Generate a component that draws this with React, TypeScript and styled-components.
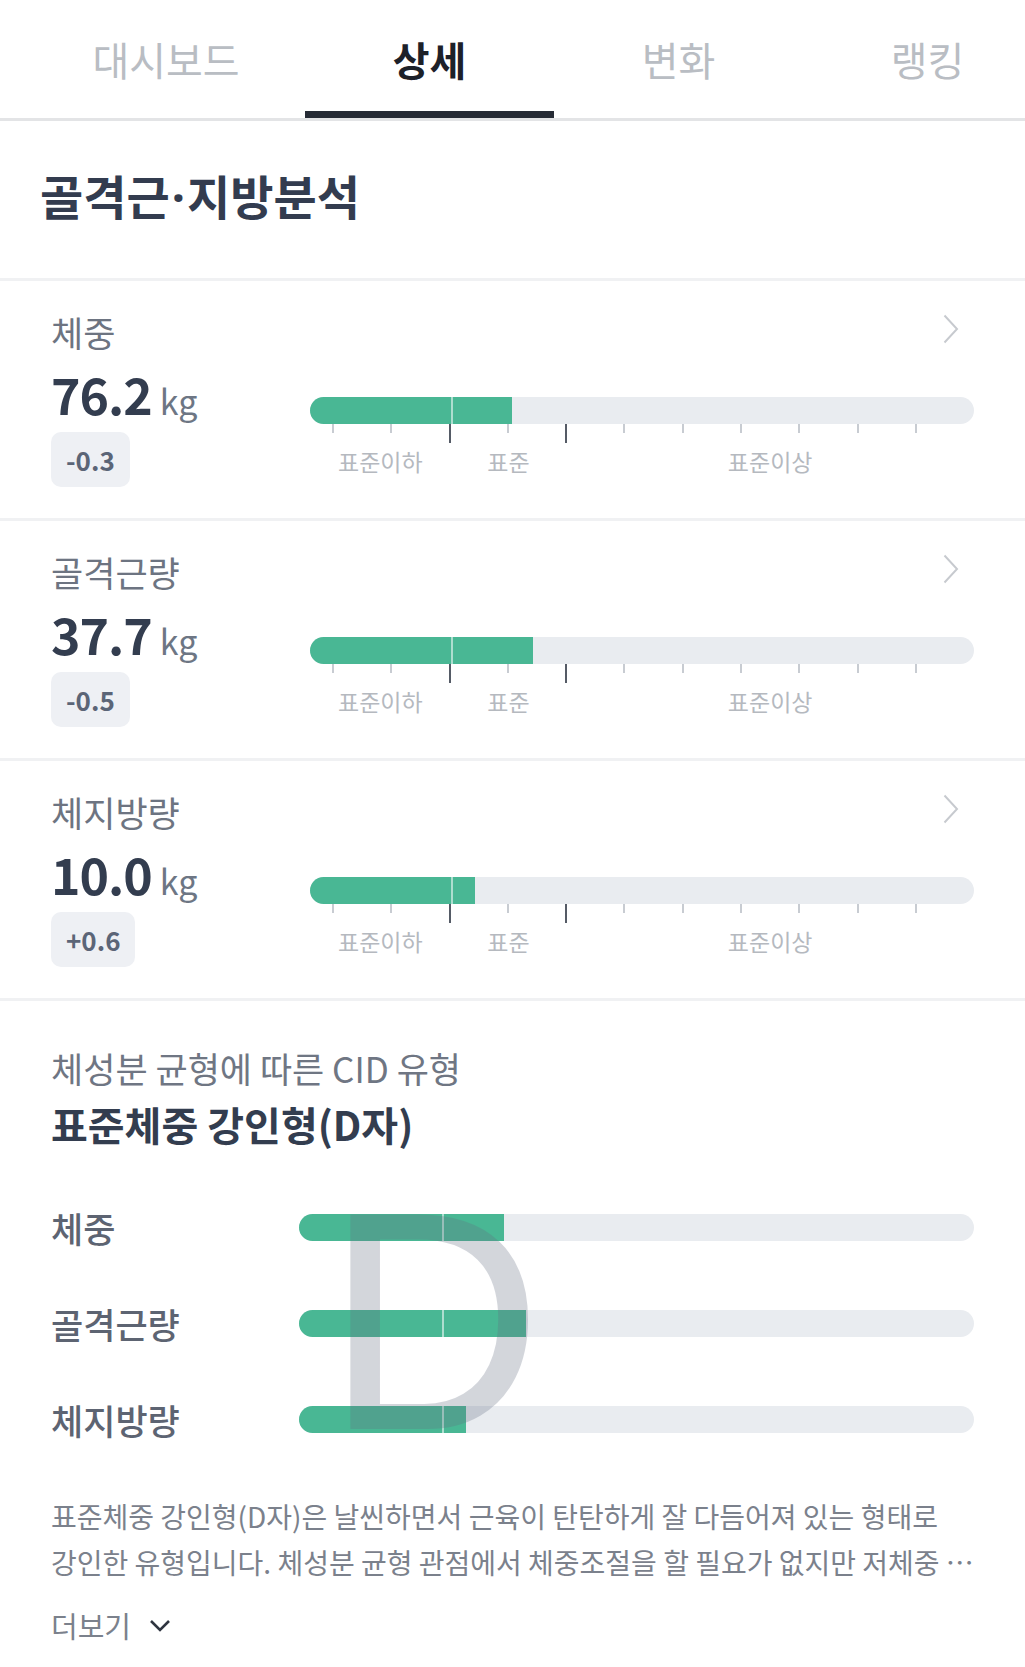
import * as React from 'react';
import styled, { createGlobalStyle } from 'styled-components';

const GlobalStyle = createGlobalStyle`
  html, body {
    margin: 0;
    padding: 0;
    background: #fff;
  }
  body {
    font-family: 'Noto Sans CJK KR', 'Noto Sans', sans-serif;
    -webkit-font-smoothing: antialiased;
  }
  * {
    box-sizing: border-box;
  }
`;

const GREEN = '#49b794';
const TRACK = '#e9ecf0';
const DIVIDER = '#f0f1f3';

const Page = styled.div`
  width: 1025px;
  overflow: hidden;
  background: #fff;
`;

const TabBar = styled.nav`
  display: flex;
  height: 121px;
  padding-left: 27px;
  border-bottom: 3px solid #e3e4e6;
  overflow: hidden;
`;

const Tab = styled.div<{ $width: number; $active?: boolean }>`
  position: relative;
  flex: 0 0 ${p => p.$width}px;
  display: flex;
  align-items: center;
  justify-content: center;
  font-size: 40px;
  font-weight: ${p => (p.$active ? 700 : 400)};
  color: ${p => (p.$active ? '#1d2129' : '#b9bdc3')};

  &::after {
    content: '';
    display: ${p => (p.$active ? 'block' : 'none')};
    position: absolute;
    left: 0;
    right: 0;
    bottom: 0;
    height: 7px;
    background: #262b35;
  }
`;

const SectionHead = styled.h2`
  margin: 0;
  height: 160px;
  padding: 46px 40px 0;
  font-size: 47px;
  line-height: 56px;
  font-weight: 700;
  color: #333c4f;
  border-bottom: 3px solid ${DIVIDER};
`;

const Dot = styled.span`
  margin: 0 2px;
  font-family: 'Noto Sans', sans-serif;
  line-height: 1;
`;

const MetricRow = styled.section`
  padding: 31px 51px;
  border-bottom: 3px solid ${DIVIDER};
`;

const RowHead = styled.div`
  display: flex;
  justify-content: space-between;
  align-items: flex-start;
  height: 40px;
`;

const RowLabel = styled.span`
  font-size: 35px;
  line-height: 40px;
  color: #6d7481;
`;

const ChevronRight = styled.svg`
  width: 16px;
  height: 30px;
  margin: 2px 15px 0 0;
`;

const RowBody = styled.div`
  display: flex;
  margin-top: 13px;
`;

const ValueCol = styled.div`
  flex: 0 0 259px;
  display: flex;
  flex-direction: column;
  align-items: flex-start;
`;

const Value = styled.div`
  height: 56px;
  font-size: 50px;
  line-height: 56px;
  font-weight: 700;
  letter-spacing: -1px;
  color: #333d4f;
`;

const Unit = styled.span`
  margin-left: 8px;
  font-size: 34px;
  line-height: 1;
  font-weight: 400;
  letter-spacing: 0;
  color: #6d7684;
`;

const Badge = styled.span`
  margin-top: 11px;
  height: 55px;
  padding: 0 15px;
  display: inline-flex;
  align-items: center;
  border-radius: 10px;
  background: #eef0f4;
  font-size: 26px;
  font-weight: 700;
  color: #5b6577;
`;

const Chart = styled.div`
  flex: 1;
  padding-top: 32px;
`;

const Track = styled.div`
  position: relative;
  flex: 1;
  height: 27px;
  border-radius: 14px;
  background: ${TRACK};
  overflow: hidden;
`;

const Fill = styled.div`
  height: 100%;
  background: ${GREEN};
`;

const Split = styled.i`
  position: absolute;
  top: 0;
  bottom: 0;
  left: 21.2%;
  width: 2px;
  background: rgba(255, 255, 255, 0.55);
`;

const Scale = styled.div`
  position: relative;
  height: 50px;
`;

const Tick = styled.i<{ $major?: boolean }>`
  position: absolute;
  top: 0;
  width: 2px;
  height: ${p => (p.$major ? 19 : 9)}px;
  background: ${p => (p.$major ? '#555b66' : '#c8ccd2')};
  transform: translateX(-50%);
`;

const ScaleLabel = styled.span`
  position: absolute;
  top: 25px;
  transform: translateX(-50%);
  font-size: 23px;
  line-height: 24px;
  color: #b5b9bf;
  white-space: nowrap;
`;

const TypeSection = styled.section`
  padding: 45px 51px 0;
`;

const TypeCaption = styled.div`
  font-size: 35px;
  line-height: 44px;
  color: #6f7683;
`;

const TypeTitle = styled.h3`
  margin: 9px 0 0;
  font-size: 40px;
  line-height: 50px;
  font-weight: 700;
  color: #333d4f;
`;

const BalanceChart = styled.div`
  position: relative;
  margin-top: 30px;
`;

const BalanceRow = styled.div`
  display: flex;
  align-items: center;
  height: 96px;
`;

const BalanceLabel = styled.span`
  flex: 0 0 248px;
  font-size: 35px;
  font-weight: 500;
  color: #5d6472;
`;

const Watermark = styled.span`
  position: absolute;
  left: 276px;
  top: -13px;
  font-family: 'Liberation Sans', Arial, sans-serif;
  font-size: 309px;
  line-height: 309px;
  color: #646e82;
  -webkit-text-stroke: 2px #646e82;
  opacity: 0.28;
  transform: scaleX(0.96);
  transform-origin: left top;
  pointer-events: none;
`;

const Description = styled.p`
  margin: 26px 0 0;
  font-size: 28px;
  line-height: 46px;
  color: #7b818c;

  span {
    display: block;
    white-space: nowrap;
  }
`;

const MoreButton = styled.button`
  margin-top: 20px;
  padding: 0;
  display: flex;
  align-items: center;
  gap: 18px;
  border: 0;
  background: none;
  font-family: inherit;
  font-size: 29px;
  line-height: 40px;
  color: #7b818c;
`;

const TICKS = Array.from({ length: 11 }, (_, i) => 3.46 + i * 8.78);

const metrics = [
  { label: '체중', value: '76.2', diff: '-0.3', fill: 30.4 },
  { label: '골격근량', value: '37.7', diff: '-0.5', fill: 33.6 },
  { label: '체지방량', value: '10.0', diff: '+0.6', fill: 24.8 },
];

const Bar = ({ fill }: { fill: number }) => (
  <Track>
    <Fill style={{ width: `${fill}%` }} />
    <Split />
  </Track>
);

const App = () => (
  <Page>
    <GlobalStyle />
    <TabBar>
      <Tab $width={278}>대시보드</Tab>
      <Tab $width={249} $active={true}>상세</Tab>
      <Tab $width={249}>변화</Tab>
      <Tab $width={249}>랭킹</Tab>
    </TabBar>

    <SectionHead>
      골격근<Dot>·</Dot>지방분석
    </SectionHead>

    {metrics.map(m => (
      <MetricRow key={m.label}>
        <RowHead>
          <RowLabel>{m.label}</RowLabel>
          <ChevronRight viewBox="0 0 16 30" fill="none">
            <polyline points="1.5,1.5 14,15 1.5,28.5" stroke="#c7cacf" strokeWidth="2" />
          </ChevronRight>
        </RowHead>
        <RowBody>
          <ValueCol>
            <Value>
              {m.value}
              <Unit>kg</Unit>
            </Value>
            <Badge>{m.diff}</Badge>
          </ValueCol>
          <Chart>
            <Bar fill={m.fill} />
            <Scale>
              {TICKS.map((t, i) => (
                <Tick key={i} $major={i === 2 || i === 4} style={{ left: `${t}%` }} />
              ))}
              <ScaleLabel style={{ left: '10.6%' }}>표준이하</ScaleLabel>
              <ScaleLabel style={{ left: '29.9%' }}>표준</ScaleLabel>
              <ScaleLabel style={{ left: '69.3%' }}>표준이상</ScaleLabel>
            </Scale>
          </Chart>
        </RowBody>
      </MetricRow>
    ))}

    <TypeSection>
      <TypeCaption>체성분 균형에 따른 CID 유형</TypeCaption>
      <TypeTitle>표준체중 강인형(D자)</TypeTitle>
      <BalanceChart>
        {metrics.map(m => (
          <BalanceRow key={m.label}>
            <BalanceLabel>{m.label}</BalanceLabel>
            <Bar fill={m.fill} />
          </BalanceRow>
        ))}
        <Watermark>D</Watermark>
      </BalanceChart>
      <Description>
        <span>표준체중 강인형(D자)은 날씬하면서 근육이 탄탄하게 잘 다듬어져 있는 형태로</span>
        <span>강인한 유형입니다. 체성분 균형 관점에서 체중조절을 할 필요가 없지만 저체중 …</span>
      </Description>
      <MoreButton type="button">
        더보기
        <svg width="22" height="13" viewBox="0 0 22 13" fill="none">
          <polyline points="2,2 11,11 20,2" stroke="#2f3540" strokeWidth="2.6" />
        </svg>
      </MoreButton>
    </TypeSection>
  </Page>
);

export default App;
